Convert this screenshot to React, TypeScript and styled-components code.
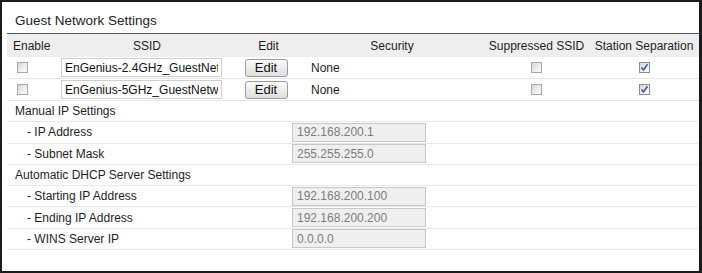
import styled, { createGlobalStyle } from "styled-components";

const GlobalStyle = createGlobalStyle`
  body {
    margin: 0;
    background: #ffffff;
  }
`;

const Frame = styled.div`
  width: 702px;
  height: 273px;
  box-sizing: border-box;
  border: 2px solid #1b1b1b;
  border-right-width: 3px;
  padding-left: 5px;
  background: #ffffff;
  font-family: "Liberation Sans", Arial, sans-serif;
  font-size: 12px;
  color: #1e1e1e;
  overflow: hidden;
`;

const Title = styled.div`
  height: 32px;
  box-sizing: border-box;
  padding: 11px 0 0 8px;
  line-height: 15px;
  font-size: 13.5px;
  color: #222222;
  border-bottom: 1px solid #2c5aa0;
`;

const cols = "50px 180px 63px 184px 105px 110px";

const HeadRow = styled.div`
  display: grid;
  grid-template-columns: ${cols};
  height: 23px;
  align-items: center;
  background: #eeeeee;
`;

const HeadCell = styled.div<{ $left?: boolean }>`
  text-align: ${(p) => (p.$left ? "left" : "center")};
  padding-left: ${(p) => (p.$left ? "6px" : "0")};
  white-space: nowrap;
`;

const SsidRow = styled.div`
  display: grid;
  grid-template-columns: ${cols};
  height: 22px;
  box-sizing: border-box;
  align-items: center;
  border-bottom: 1px solid #e6e6e6;
`;

const Cell = styled.div<{ $align?: string; $pad?: number }>`
  display: flex;
  align-items: center;
  justify-content: ${(p) => p.$align || "flex-start"};
  padding-left: ${(p) => p.$pad || 0}px;
`;

const SsidInput = styled.input`
  width: 161px;
  height: 19px;
  box-sizing: border-box;
  margin-left: 4px;
  border: 1px solid #cfcfcf;
  background: #ffffff;
  padding: 0 3px;
  font-family: "Liberation Sans", Arial, sans-serif;
  font-size: 12px;
  color: #111111;
  outline: none;
`;

const EditButton = styled.button`
  width: 43px;
  height: 18px;
  margin-right: 5px;
  padding: 0;
  border: 1px solid #9a9a9a;
  border-radius: 3px;
  background: linear-gradient(#fbfbfb, #dedede);
  font-family: "Liberation Sans", Arial, sans-serif;
  font-size: 13px;
  color: #111111;
  line-height: 16px;
`;

const Box = styled.span<{ $checked?: boolean }>`
  display: inline-flex;
  align-items: center;
  justify-content: center;
  width: 11px;
  height: 11px;
  box-sizing: border-box;
  border: 1px solid ${(p) => (p.$checked ? "#8c8c8c" : "#a8a8a8")};
  background: linear-gradient(135deg, #d6d6d6, #f4f4f4 70%, #fbfbfb);
`;

const SectionRow = styled.div`
  display: grid;
  grid-template-columns: 285px 1fr;
  height: 21.3px;
  box-sizing: border-box;
  align-items: center;
  border-bottom: 1px solid #e8e8e8;
  margin-right: 1px;
`;

const Label = styled.div<{ $sub?: boolean }>`
  padding-left: ${(p) => (p.$sub ? 20 : 8)}px;
  white-space: nowrap;
`;

const ValueInput = styled.input`
  width: 134px;
  height: 19px;
  box-sizing: border-box;
  border: 1px solid #c8c8c8;
  background: #efefef;
  padding: 0 4px;
  font-family: "Liberation Sans", Arial, sans-serif;
  font-size: 12px;
  color: #7c7c7c;
  outline: none;
`;

function Checkbox({ checked }: { checked?: boolean }) {
  return (
    <Box $checked={checked}>
      {checked && (
        <svg width="9" height="9" viewBox="0 0 9 9">
          <path d="M1.5 4.5 L3.5 7 L7.5 1.2" fill="none" stroke="#3b58a6" strokeWidth="1.6" />
        </svg>
      )}
    </Box>
  );
}

const ssids = ["EnGenius-2.4GHz_GuestNetwork", "EnGenius-5GHz_GuestNetwork"];

const fields: { label: string; value?: string }[] = [
  { label: "Manual IP Settings" },
  { label: "- IP Address", value: "192.168.200.1" },
  { label: "- Subnet Mask", value: "255.255.255.0" },
  { label: "Automatic DHCP Server Settings" },
  { label: "- Starting IP Address", value: "192.168.200.100" },
  { label: "- Ending IP Address", value: "192.168.200.200" },
  { label: "- WINS Server IP", value: "0.0.0.0" },
];

export default function App() {
  return (
    <Frame>
      <GlobalStyle />
      <Title>Guest Network Settings</Title>
      <HeadRow>
        <HeadCell $left>Enable</HeadCell>
        <HeadCell>SSID</HeadCell>
        <HeadCell>Edit</HeadCell>
        <HeadCell>Security</HeadCell>
        <HeadCell>Suppressed SSID</HeadCell>
        <HeadCell>Station Separation</HeadCell>
      </HeadRow>
      {ssids.map((ssid) => (
        <SsidRow key={ssid}>
          <Cell $pad={10}>
            <Checkbox />
          </Cell>
          <Cell>
            <SsidInput readOnly value={ssid} />
          </Cell>
          <Cell $align="center">
            <EditButton>Edit</EditButton>
          </Cell>
          <Cell $pad={11}>None</Cell>
          <Cell $align="center">
            <Checkbox />
          </Cell>
          <Cell $align="center">
            <Checkbox checked />
          </Cell>
        </SsidRow>
      ))}
      {fields.map((f) => (
        <SectionRow key={f.label}>
          <Label $sub={!!f.value}>{f.label}</Label>
          {f.value && <ValueInput readOnly value={f.value} />}
        </SectionRow>
      ))}
    </Frame>
  );
}
